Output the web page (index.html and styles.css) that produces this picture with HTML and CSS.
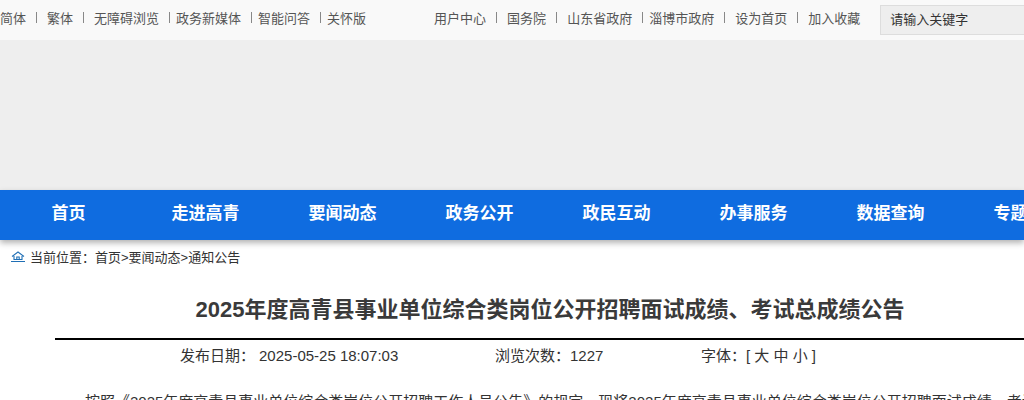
FILE: index.html
```html
<!DOCTYPE html>
<html lang="zh-CN">
<head>
  <meta charset="UTF-8" />
  <title>2025年度高青县事业单位综合类岗位公开招聘面试成绩、考试总成绩公告</title>
  <link rel="stylesheet" href="styles.css">
</head>
<body>

  <!-- 顶部工具条 -->
  <div class="topbar">
    <div class="toplinks">
      <a>简体</a><i class="sep"></i>
      <a>繁体</a><i class="sep"></i>
      <a>无障碍浏览</a><i class="sep tight"></i>
      <a>政务新媒体</a><i class="sep tight"></i>
      <a>智能问答</a><i class="sep tight"></i>
      <a>关怀版</a>
    </div>
    <div class="toplinks right">
      <a>用户中心</a><i class="sep"></i>
      <a>国务院</a><i class="sep"></i>
      <a>山东省政府</a><i class="sep tight"></i>
      <a>淄博市政府</a><i class="sep"></i>
      <a>设为首页</a><i class="sep"></i>
      <a>加入收藏</a>
    </div>
    <div class="search">请输入关键字</div>
  </div>

  <div class="banner"></div>

  <!-- 主导航 -->
  <div class="nav">
    <a>首页</a>
    <a>走进高青</a>
    <a>要闻动态</a>
    <a>政务公开</a>
    <a>政民互动</a>
    <a>办事服务</a>
    <a>数据查询</a>
    <a>专题专栏</a>
  </div>

  <div class="crumb">
    <svg class="home" width="14" height="11" viewBox="0 0 14 11">
      <path d="M1 5.5 7 1l6 4.5M3 5v3.5h8V5M5.8 8.5V6h2.4v2.5" fill="none" stroke="#1f6fb5" stroke-width="1.1"/>
      <path d="M0 10.5h14" stroke="#1f6fb5"/>
    </svg>
    <span>当前位置：</span><span class="path">首页&gt;要闻动态&gt;通知公告</span>
  </div>

  <div class="article">
    <h1>2025年度高青县事业单位综合类岗位公开招聘面试成绩、考试总成绩公告</h1>
    <div class="meta">
      <span class="date">发布日期：<b>2025-05-25 18:07:03</b></span>
      <span class="views">浏览次数：1227</span>
      <span>字体：[ 大 中 小 ]</span>
    </div>
    <p>按照《2025年度高青县事业单位综合类岗位公开招聘工作人员公告》的规定，现将2025年度高青县事业单位综合类岗位公开招聘面试成绩、考试总成绩予以公告。</p>
  </div>

</body>
</html>
```

FILE: styles.css
```css
html, body {
  margin: 0;
  height: 400px;
  overflow: hidden;
  font-family: "Liberation Sans", "Noto Sans CJK SC", sans-serif;
  color: #333;
  background-color: #fff;
}

.topbar {
  display: flex;
  align-items: center;
  height: 40px;
  background-color: #f9f9f9;
  font-size: 13px;
  color: #555;
}

.toplinks {
  display: flex;
  align-items: center;
  flex-shrink: 0;
  margin-bottom: 6px;
}

.toplinks.right {
  margin-left: 68px;
}

.sep {
  width: 1px;
  height: 11px;
  margin: 0 10px;
  background-color: #888;
}

.sep.tight {
  margin: 0 6px 0 10px;
}

.search {
  flex-shrink: 0;
  box-sizing: border-box;
  width: 200px;
  height: 30px;
  margin-left: 20px;
  padding-left: 9px;
  line-height: 28px;
  border: 1px solid #ddd;
  background-color: #eee;
  color: #333;
}

.banner {
  height: 150px;
  background-color: #eee;
}

.nav {
  display: flex;
  height: 50px;
  background-color: #0f6ce0;
  box-shadow: 0 3px 6px rgba(0,0,0,0.3);
  position: relative;
}

.nav a {
  flex: 0 0 137px;
  text-align: center;
  line-height: 47px;
  font-size: 17px;
  font-weight: bold;
  color: #fff;
  white-space: nowrap;
}

.crumb {
  display: flex;
  align-items: center;
  height: 33px;
  padding-left: 11px;
  font-size: 13px;
}

.home {
  margin-right: 5px;
}

.article {
  width: 990px;
  margin-left: 55px;
}

h1 {
  margin: 0;
  height: 65px;
  line-height: 74px;
  border-bottom: 2px solid #000;
  text-align: center;
  font-size: 22px;
  color: #3a3a3a;
  white-space: nowrap;
}

.meta {
  display: flex;
  height: 34px;
  padding-left: 125px;
  line-height: 32px;
  font-size: 15px;
}

.meta b {
  font-weight: normal;
  margin-left: 4px;
}

.date {
  width: 315px;
}

.views {
  width: 206px;
}

p {
  margin: 15px 0 0;
  text-indent: 2em;
  font-size: 15px;
  line-height: 26px;
  white-space: nowrap;
}
```
